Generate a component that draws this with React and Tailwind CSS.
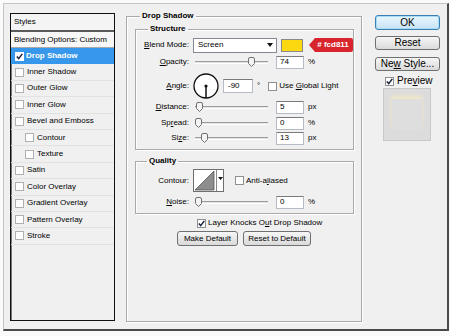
import React from "react";

function Box({ checked, className = "" }) {
  return (
    <span
      className={`flex h-[9px] w-[9px] shrink-0 items-center justify-center border border-[#8e8f8f] bg-white ${className}`}
    >
      {checked && (
        <svg width="7" height="7" viewBox="0 0 7 7">
          <path d="M0.8 3.6 L2.7 5.6 L6.3 0.9" fill="none" stroke="#14213d" strokeWidth="1.5" />
        </svg>
      )}
    </span>
  );
}

function Thumb() {
  return (
    <svg width="7" height="10" viewBox="0 0 7 10" className="shrink-0">
      <path
        d="M0.5 2 Q0.5 0.5 2 0.5 H5 Q6.5 0.5 6.5 2 V6.5 L3.5 9.5 L0.5 6.5 Z"
        fill="#f4f4f4"
        stroke="#707070"
      />
    </svg>
  );
}

function Slider({ left }) {
  return (
    <div className="flex h-full w-[75px] shrink-0 items-center pl-[2px]">
      <div className={`h-[3px] shrink-0 border-y border-t-[#9c9c9c] border-b-white bg-[#e2e2e2] ${left}`} />
      <Thumb />
      <div className="h-[3px] flex-1 border-y border-t-[#9c9c9c] border-b-white bg-[#e2e2e2]" />
    </div>
  );
}

function Field({ value, unit }) {
  return (
    <>
      <div className="ml-[8px] flex h-[13px] w-[28px] shrink-0 items-center border border-[#b5bcc5] border-t-[#7a7a7a] bg-white pl-[3px]">
        {value}
      </div>
      <span className="ml-[4px]">{unit}</span>
    </>
  );
}

function Label({ children }) {
  return <span className="mr-[4px] w-[53px] shrink-0 text-right">{children}</span>;
}

function U({ children }) {
  return <span className="underline underline-offset-1">{children}</span>;
}

function Btn({ children, className = "" }) {
  return (
    <div
      className={`flex shrink-0 items-center justify-center rounded-[3px] border border-[#707070] bg-gradient-to-b from-[#f6f6f6] to-[#dadada] ${className}`}
    >
      <span>{children}</span>
    </div>
  );
}

const styles = [
  { name: "Inner Shadow" },
  { name: "Outer Glow" },
  { name: "Inner Glow" },
  { name: "Bevel and Emboss" },
  { name: "Contour", indent: true },
  { name: "Texture", indent: true },
  { name: "Satin" },
  { name: "Color Overlay" },
  { name: "Gradient Overlay" },
  { name: "Pattern Overlay" },
  { name: "Stroke" },
];

export default function App() {
  return (
    <div className="h-[336px] w-[450px] overflow-hidden bg-[#fafafa] pl-[3px] pt-[3px] font-['Liberation_Sans',Arial,sans-serif] text-[8px] leading-none text-black">
      <div className="flex h-[328px] w-[446px] border border-[#c4c4c4] border-b-2 border-r-2 border-b-[#4a4a4a] border-r-[#4a4a4a] bg-[#f0f0f0] pl-[6px] pt-[7px]">
        {/* Styles list */}
        <div className="mt-[2px] flex h-[308px] w-[105px] shrink-0 flex-col border border-[#111] bg-[#f0f0f0] shadow-[inset_1px_1px_0_#777]">
          <div className="flex h-[18px] shrink-0 items-center border-b-2 border-[#5a5a5a] bg-[#f4f4f4] pl-[3px]">
            Styles
          </div>
          <div className="flex h-[16px] shrink-0 items-center border-b border-[#a8a8a8] bg-[#f7f7f7] pl-[3px]">
            Blending Options: Custom
          </div>
          <div className="flex h-[16.4px] shrink-0 items-center bg-[#3797ea] pl-[4px] font-bold text-white">
            <Box checked className="border-white" />
            <span className="ml-[2px]">Drop Shadow</span>
          </div>
          {styles.map((s) => (
            <div
              key={s.name}
              className={`flex h-[16.4px] shrink-0 items-center border-b border-[#e2e2e2] ${s.indent ? "pl-[14px]" : "pl-[4px]"}`}
            >
              <Box className="h-[8px] w-[8px] border-[#b0b0b0] bg-[#f2f2f2]" />
              <span className="ml-[3px]">{s.name}</span>
            </div>
          ))}
        </div>

        {/* Drop Shadow group */}
        <fieldset className="ml-[11px] h-[311px] w-[235px] shrink-0 border border-[#a9a9a9] pl-[8px] pr-[7px] shadow-[1px_1px_0_#fff,inset_1px_1px_0_#fff]">
          <legend className="ml-[5px] px-[2px] text-[8px] font-bold leading-[10px]">Drop Shadow</legend>

          <fieldset className="mt-[3px] border border-[#a9a9a9] pb-[4px] shadow-[1px_1px_0_#fff,inset_1px_1px_0_#fff]">
            <legend className="ml-[12px] px-[2px] font-bold leading-[10px]">Structure</legend>

            <div className="mt-[3px] flex h-[16px] items-center whitespace-nowrap">
              <Label>
                <U>B</U>lend Mode:
              </Label>
              <div className="flex h-[15px] w-[84px] shrink-0 items-center justify-between border border-[#828790] bg-white pl-[4px] pr-[3px]">
                <span>Screen</span>
                <svg width="6" height="4" viewBox="0 0 6 4">
                  <path d="M0 0 H6 L3 4 Z" fill="#111" />
                </svg>
              </div>
              <div className="ml-[4px] h-[13px] w-[22px] shrink-0 border border-[#8a8a8a] bg-[#fcd811]" />
              <div className="ml-[6px] flex h-[14px] w-[44px] shrink-0 items-center justify-center rounded-r-[2px] bg-[#d8242c] pl-[4px] font-bold text-white [clip-path:polygon(0_50%,6px_0,100%_0,100%_100%,6px_100%)]">
                # fcd811
              </div>
            </div>

            <div className="mt-[1px] flex h-[16px] items-center">
              <Label>
                <U>O</U>pacity:
              </Label>
              <Slider left="w-[53px]" />
              <Field value="74" unit="%" />
            </div>

            <div className="mt-[3px] flex h-[26px] items-center whitespace-nowrap">
              <Label>
                <U>A</U>ngle:
              </Label>
              <svg width="26" height="26" viewBox="0 0 26 26" className="shrink-0">
                <circle cx="13" cy="13" r="12" fill="#fff" stroke="#111" strokeWidth="1.3" />
                <line x1="13" y1="13" x2="13" y2="25" stroke="#111" strokeWidth="1.5" />
                <circle cx="13" cy="13" r="1.6" fill="#111" />
              </svg>
              <div className="ml-[4px] flex h-[14px] w-[30px] shrink-0 items-center border border-[#b5bcc5] border-t-[#7a7a7a] bg-white pl-[4px]">
                -90
              </div>
              <span className="ml-[4px]">°</span>
              <Box className="ml-[8px]" />
              <span className="ml-[2px]">
                Use <U>G</U>lobal Light
              </span>
            </div>

            <div className="mt-[1px] flex h-[14px] items-center">
              <Label>
                <U>D</U>istance:
              </Label>
              <Slider left="w-[1px]" />
              <Field value="5" unit="px" />
            </div>

            <div className="mt-[2px] flex h-[14px] items-center">
              <Label>
                Sp<U>r</U>ead:
              </Label>
              <Slider left="w-0" />
              <Field value="0" unit="%" />
            </div>

            <div className="mt-[1px] flex h-[14px] items-center">
              <Label>
                Si<U>z</U>e:
              </Label>
              <Slider left="w-[6px]" />
              <Field value="13" unit="px" />
            </div>
          </fieldset>

          <fieldset className="mt-[6px] border border-[#a9a9a9] pb-[4px] shadow-[1px_1px_0_#fff,inset_1px_1px_0_#fff]">
            <legend className="ml-[11px] px-[2px] font-bold leading-[10px]">Quality</legend>

            <div className="mt-[3px] flex h-[23px] items-center whitespace-nowrap">
              <Label>Contour:</Label>
              <div className="flex h-[23px] w-[31px] shrink-0 border border-[#6f6f6f] bg-white">
                <svg width="22" height="21" viewBox="0 0 22 21" className="shrink-0">
                  <path d="M1 20 L20 1 V20 Z" fill="#8d8d8d" stroke="#555" strokeWidth="0.8" />
                </svg>
                <div className="flex flex-1 items-start justify-center border-l border-[#8a8a8a] pt-[7px]">
                  <svg width="5" height="3" viewBox="0 0 5 3">
                    <path d="M0 0 H5 L2.5 3 Z" fill="#111" />
                  </svg>
                </div>
              </div>
              <Box className="ml-[11px]" />
              <span className="ml-[2px]">
                Anti-a<U>l</U>iased
              </span>
            </div>

            <div className="mt-[3px] flex h-[14px] items-center">
              <Label>
                <U>N</U>oise:
              </Label>
              <Slider left="w-0" />
              <Field value="0" unit="%" />
            </div>
          </fieldset>

          <div className="ml-[62px] mt-[3px] flex h-[12px] items-center whitespace-nowrap">
            <Box checked />
            <span className="ml-[2px]">
              Layer Knocks O<U>u</U>t Drop Shadow
            </span>
          </div>

          <div className="ml-[42px] mt-[2px] flex gap-[5px] whitespace-nowrap">
            <Btn className="h-[15px] w-[61px]">Make Default</Btn>
            <Btn className="h-[15px] w-[68px]">Reset to Default</Btn>
          </div>
        </fieldset>

        {/* Right column */}
        <div className="ml-[13px] flex w-[65px] shrink-0 flex-col whitespace-nowrap text-[10px]">
          <div className="mt-[4px] flex h-[15px] items-center justify-center rounded-[3px] border border-[#3c7fb1] bg-gradient-to-b from-[#eaf6fd] to-[#c6e3f5] shadow-[inset_0_0_0_1px_#a8dcf8]">
            OK
          </div>
          <Btn className="mt-[6px] h-[14px]">Reset</Btn>
          <Btn className="mt-[7px] h-[14px]">
            Ne<U>w</U> Style...
          </Btn>
          <div className="mt-[5px] flex h-[10px] items-center pl-[10px]">
            <Box checked />
            <span className="ml-[3px]">
              Pre<U>v</U>iew
            </span>
          </div>
          <div className="ml-[8px] mt-[2px] flex h-[53px] w-[48px] items-center justify-center border border-[#c8c8c8] bg-[#dcdcdc]">
            <div className="h-[31px] w-[30px] bg-[#dedede] shadow-[0_-3px_4px_rgba(250,238,190,0.7)]" />
          </div>
        </div>
      </div>
    </div>
  );
}
